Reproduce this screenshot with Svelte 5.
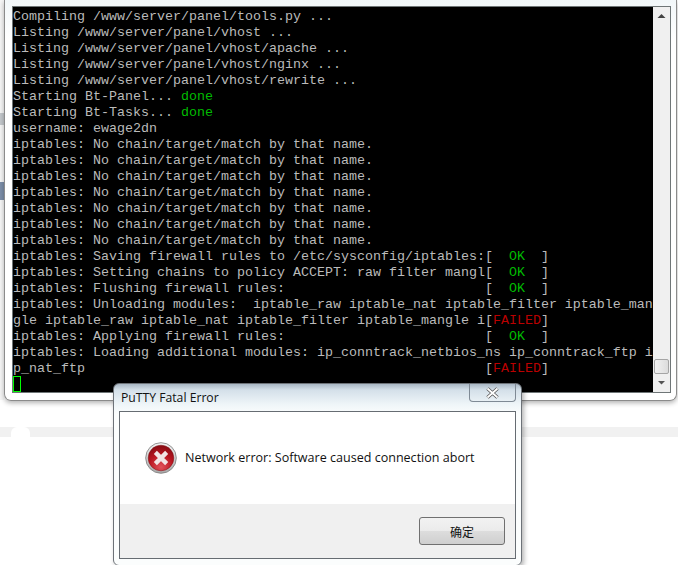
<script>
    const lines = [
        [["Compiling /www/server/panel/tools.py ..."]],
        [["Listing /www/server/panel/vhost ..."]],
        [["Listing /www/server/panel/vhost/apache ..."]],
        [["Listing /www/server/panel/vhost/nginx ..."]],
        [["Listing /www/server/panel/vhost/rewrite ..."]],
        [["Starting Bt-Panel... "], ["done", "green"]],
        [["Starting Bt-Tasks... "], ["done", "green"]],
        [["username: ewage2dn"]],
        [["iptables: No chain/target/match by that name."]],
        [["iptables: No chain/target/match by that name."]],
        [["iptables: No chain/target/match by that name."]],
        [["iptables: No chain/target/match by that name."]],
        [["iptables: No chain/target/match by that name."]],
        [["iptables: No chain/target/match by that name."]],
        [["iptables: No chain/target/match by that name."]],
        [["iptables: Saving firewall rules to /etc/sysconfig/iptables:[  "], ["OK", "green"], ["  ]"]],
        [["iptables: Setting chains to policy ACCEPT: raw filter mangl[  "], ["OK", "green"], ["  ]"]],
        [["iptables: Flushing firewall rules:                         [  "], ["OK", "green"], ["  ]"]],
        [["iptables: Unloading modules:  iptable_raw iptable_nat iptable_filter iptable_man"]],
        [["gle iptable_raw iptable_nat iptable_filter iptable_mangle i["], ["FAILED", "red"], ["]"]],
        [["iptables: Applying firewall rules:                         [  "], ["OK", "green"], ["  ]"]],
        [["iptables: Loading additional modules: ip_conntrack_netbios_ns ip_conntrack_ftp i"]],
        [["p_nat_ftp                                                  ["], ["FAILED", "red"], ["]"]]
    ];
</script>

<div class="desktop">
    <div class="band"></div>
    <div class="blob"></div>
    <div class="edge"></div>
    <div class="terminal">
        <div class="screen">
            {#each lines as line}
                <div class="line">{#each line as part}<span class={part[1]}>{part[0]}</span>{/each}</div>
            {/each}
            <div class="line"><span class="cursor"></span></div>
        </div>
        <div class="scrollbar">
            <svg class="arrow" width="9" height="6" viewBox="0 0 9 6"><path d="M0.5 5L4.5 1L8.5 5Z" fill="#444"/></svg>
            <div class="track"></div>
            <div class="thumb"></div>
            <svg class="arrow" width="9" height="6" viewBox="0 0 9 6"><path d="M1 1L4.5 4.5L8 1Z" fill="#555"/></svg>
        </div>
    </div>

    <div class="dialog">
        <div class="titlebar">
            <span class="title">PuTTY Fatal Error</span>
            <div class="close">
                <svg width="15" height="12" viewBox="0 0 15 12"><path d="M2.5 1.5L12.5 10.5M12.5 1.5L2.5 10.5" stroke="#555" stroke-width="3.4"/><path d="M2.5 1.5L12.5 10.5M12.5 1.5L2.5 10.5" stroke="#fff" stroke-width="1.8"/></svg>
            </div>
        </div>
        <div class="client">
            <div class="message">
                <svg class="erricon" width="32" height="32" viewBox="0 0 34 34">
                    <defs>
                        <linearGradient id="ring" x1="0" y1="0" x2="0" y2="1">
                            <stop offset="0" stop-color="#f4f4f4"/>
                            <stop offset="1" stop-color="#a8a8a8"/>
                        </linearGradient>
                        <radialGradient id="disc" cx="0.5" cy="0.85" r="0.8">
                            <stop offset="0" stop-color="#e0525a"/>
                            <stop offset="0.6" stop-color="#b9141f"/>
                            <stop offset="1" stop-color="#8c0c14"/>
                        </radialGradient>
                    </defs>
                    <circle cx="17" cy="17" r="16.3" fill="url(#ring)" stroke="#777" stroke-width="0.8"/>
                    <circle cx="17" cy="17" r="13.6" fill="url(#disc)" stroke="#7a0a10" stroke-width="0.5"/>
                    <path d="M11 11L23 23M23 11L11 23" stroke="#f2e4e4" stroke-width="4.6"/>
                </svg>
                <span>Network error: Software caused connection abort</span>
            </div>
            <div class="footer">
                <button class="ok">确定</button>
            </div>
        </div>
    </div>
</div>

<style>
    :global(body) {
        margin: 0;
        background: #fff;
    }

    .desktop {
        position: relative;
        width: 678px;
        height: 565px;
        overflow: hidden;
        background: #fff;
    }

    .band {
        position: absolute;
        left: 0;
        top: 427px;
        width: 678px;
        height: 10px;
        background: #f1f1f1;
    }

    .blob {
        position: absolute;
        left: 11px;
        top: 427px;
        width: 19px;
        height: 10px;
        border-radius: 6px 6px 0 0;
        background: #fff;
    }

    .edge {
        position: absolute;
        left: 0;
        top: 0;
        width: 4px;
        height: 400px;
        background: linear-gradient(#f6f6f6 113px, #c4c8cc 113px, #c4c8cc 125px, #f6f6f6 125px, #f6f6f6 182px, #7c8ea8 182px, #7c8ea8 200px, #f6f6f6 200px);
    }

    .terminal {
        position: absolute;
        left: 4px;
        top: 0;
        width: 673px;
        height: 401px;
        box-sizing: border-box;
        padding: 6px 5px 7px 7px;
        display: flex;
        background: linear-gradient(#f2f7f9, #fff 40px);
        border: 1px solid #8b8b8b;
        border-top: 0;
        border-radius: 0 0 7px 7px;
        box-shadow: 0 2px 5px rgba(0, 0, 0, 0.3);
    }

    .screen {
        flex: 1;
        background: #000;
        border: 1px solid #6f7677;
        border-right: 0;
        padding: 2px 0 0 0;
        font-family: "Liberation Mono", monospace;
        font-size: 13.33px;
        line-height: 16px;
        color: #bbb;
    }

    .line {
        height: 16px;
        white-space: pre;
    }

    .green {
        color: #00bb00;
    }

    .red {
        color: #bb0000;
    }

    .cursor {
        display: inline-block;
        box-sizing: border-box;
        width: 8px;
        height: 16px;
        margin-top: -1px;
        border: 1px solid #00ff00;
        vertical-align: top;
    }

    .scrollbar {
        width: 17px;
        display: flex;
        flex-direction: column;
        align-items: center;
        background: #f0f0f0;
        border-top: 1px solid #6f7677;
        border-right: 1px solid #6f7677;
        border-bottom: 1px solid #6f7677;
    }

    .arrow {
        flex: none;
        margin: 6px 0;
    }

    .track {
        flex: 1;
    }

    .thumb {
        box-sizing: border-box;
        width: 15px;
        height: 15px;
        border: 1px solid #a5a5a5;
        border-radius: 2px;
        background: linear-gradient(90deg, #f2f2f2, #dcdcdc);
    }

    .dialog {
        position: absolute;
        left: 113px;
        top: 383px;
        width: 409px;
        height: 183px;
        box-sizing: border-box;
        padding: 0 5px 6px 5px;
        display: flex;
        flex-direction: column;
        border: 1px solid #6d7278;
        border-radius: 6px;
        background: linear-gradient(#a9b7c4, #d4e0e9 6px, #eef5f8 20px, #fbfdfd 30px);
        box-shadow: 2px 2px 5px rgba(0, 0, 0, 0.3);
    }

    .titlebar {
        height: 27px;
        flex: none;
        display: flex;
        justify-content: space-between;
    }

    .title {
        font-family: "Open Sans", sans-serif;
        font-size: 12.2px;
        line-height: 27px;
        padding-left: 2px;
        color: #111;
    }

    .close {
        width: 47px;
        height: 18px;
        box-sizing: border-box;
        display: flex;
        align-items: center;
        justify-content: center;
        border: 1px solid #7f8a95;
        border-top: 0;
        border-radius: 0 0 4px 4px;
    }

    .client {
        flex: 1;
        display: flex;
        flex-direction: column;
        border: 1px solid #666c72;
        background: #fff;
    }

    .message {
        height: 92px;
        flex: none;
        display: flex;
        align-items: center;
        padding-left: 25px;
        font-family: "Open Sans", sans-serif;
        font-size: 12.55px;
        color: #111;
    }

    .erricon {
        margin-right: 8px;
    }

    .message span {
        margin-bottom: 2px;
    }

    .footer {
        flex: 1;
        display: flex;
        justify-content: flex-end;
        align-items: flex-start;
        padding: 13px 10px 0 0;
        background: #f0f0f0;
    }

    .ok {
        width: 86px;
        height: 28px;
        padding: 0;
        border: 1px solid #707070;
        border-radius: 3px;
        background: linear-gradient(#f2f2f2 0, #ebebeb 48%, #dddddd 50%, #cfcfcf 100%);
        font-family: "Noto Sans CJK SC", sans-serif;
        font-size: 12px;
        color: #111;
    }
</style>
